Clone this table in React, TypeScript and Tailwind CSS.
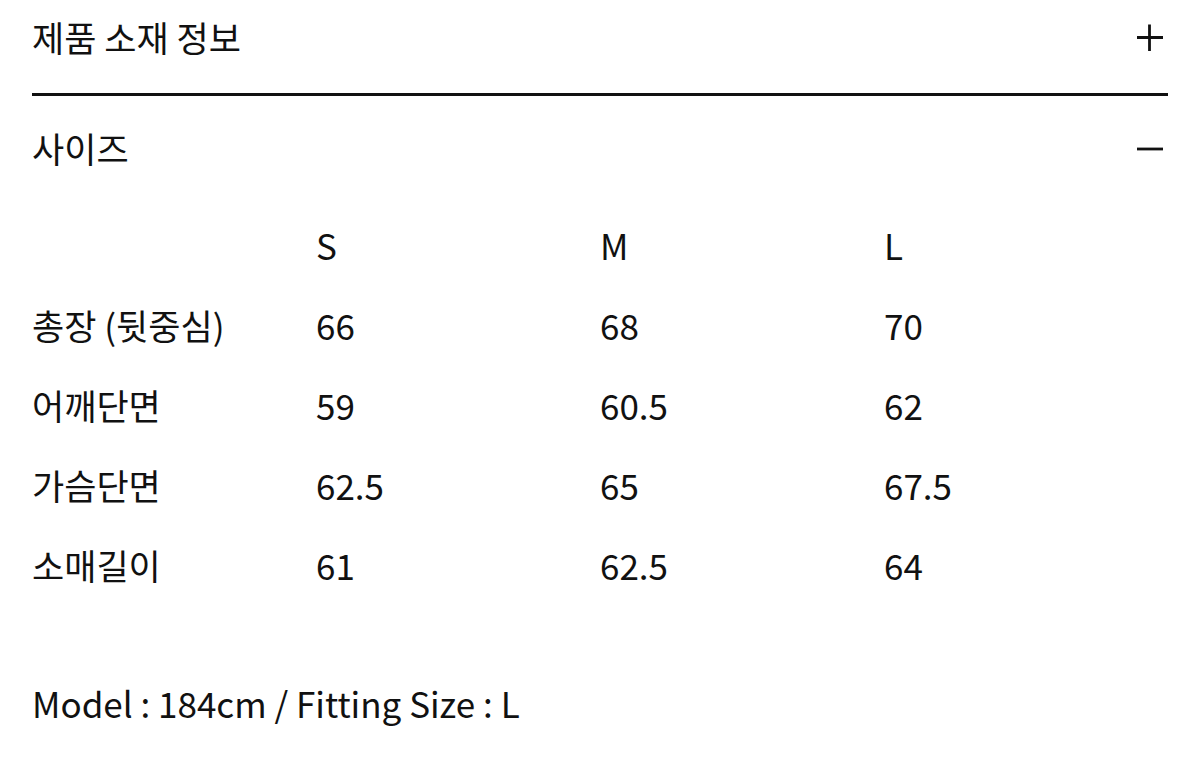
import React from "react";

const rows = [
  ["총장 (뒷중심)", "66", "68", "70"],
  ["어깨단면", "59", "60.5", "62"],
  ["가슴단면", "62.5", "65", "67.5"],
  ["소매길이", "61", "62.5", "64"],
];

export default function App() {
  return (
    <div
      className="w-[1200px] h-[761px] bg-white text-[#111] px-8 overflow-hidden"
      style={{ fontFamily: '"Noto Sans CJK KR", "Noto Sans", sans-serif' }}
    >
      <div className="flex items-center justify-between h-[78px]">
        <span className="text-[35px] leading-none pb-[6px]">제품 소재 정보</span>
        <svg width="28" height="28" viewBox="0 0 28 28" className="mr-[4px] -mt-[3px]">
          <path d="M1 13.5H27M13.5 0.5V27" stroke="#111" strokeWidth="2.8" />
        </svg>
      </div>
      <div className="mt-[15px] h-[3px] bg-[#111]" />
      <div className="flex items-center justify-between h-[108px]">
        <span className="text-[35px] leading-none pb-[6px]">사이즈</span>
        <svg width="28" height="4" viewBox="0 0 28 4" className="mr-[4px] -mt-[2px]">
          <path d="M1 2H27" stroke="#111" strokeWidth="2.8" />
        </svg>
      </div>
      <div className="mt-[3px]">
        {[["", "S", "M", "L"], ...rows].map((r, i) => (
          <div key={i} className="grid grid-cols-[284px_284px_284px_1fr] h-[80px] items-center text-[35px] leading-none">
            {r.map((c, j) => (
              <span key={j} className="pb-[6px]">{c}</span>
            ))}
          </div>
        ))}
      </div>
      <div className="mt-[58px] h-[80px] flex items-center text-[35px] leading-none">
        <span className="pb-[6px]">Model : 184cm / Fitting Size : L</span>
      </div>
    </div>
  );
}
